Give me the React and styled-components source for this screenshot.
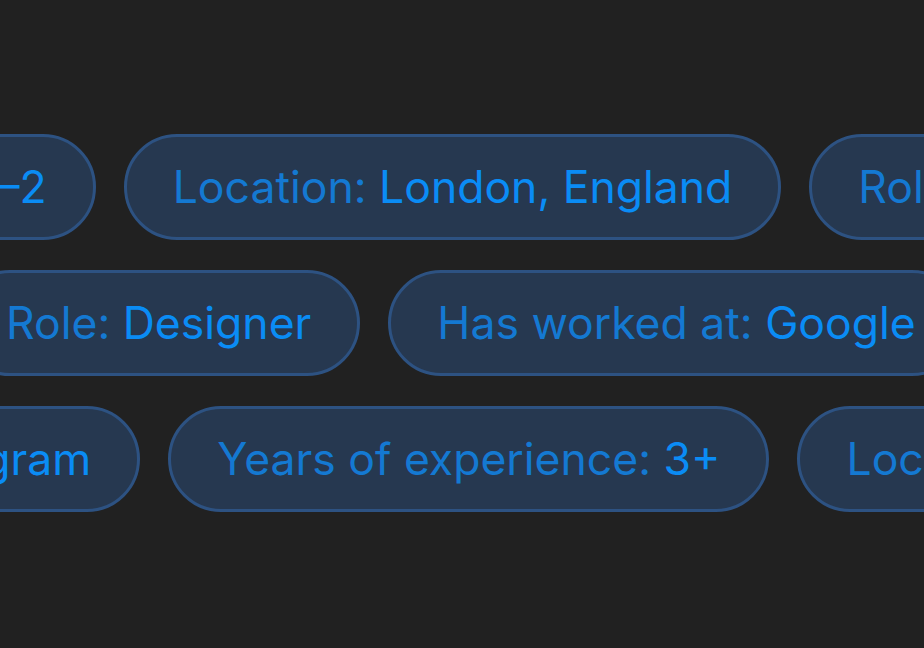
import React from "react";
import styled, { createGlobalStyle } from "styled-components";

const GlobalStyle = createGlobalStyle`
  html, body {
    margin: 0;
    padding: 0;
    background-color: #212121;
    overflow: hidden;
  }
`;

const Stage = styled.div`
  width: 924px;
  height: 648px;
  overflow: hidden;
  background-color: #212121;
  padding-top: 134px;
  box-sizing: border-box;
  display: flex;
  flex-direction: column;
  gap: 30px;
  font-family: Inter, Roboto, "Liberation Sans", sans-serif;
`;

const Row = styled.div`
  display: flex;
  flex-wrap: nowrap;
  gap: 28px;
  margin-left: ${(props) => props.offset}px;
`;

const Chip = styled.div`
  flex: none;
  display: flex;
  align-items: center;
  height: 106px;
  box-sizing: border-box;
  padding: 0 46px;
  border: 3px solid #2d5282;
  border-radius: 53px;
  background-color: #263850;
  font-size: 44.5px;
  font-weight: 400;
  white-space: nowrap;
`;

const Label = styled.span`
  color: #1479d2;
`;

const Value = styled.span`
  color: #0a8cf5;
`;

const rows = [
  {
    offset: -516,
    chips: [
      ["Years of experience:", "1–2"],
      ["Location:", "London, England"],
      ["Role:", "Designer"],
    ],
  },
  {
    offset: -43,
    chips: [
      ["Role:", "Designer"],
      ["Has worked at:", "Google"],
    ],
  },
  {
    offset: -495,
    chips: [
      ["Has worked at:", "Instagram"],
      ["Years of experience:", "3+"],
      ["Location:", "London, England"],
    ],
  },
];

function App() {
  return (
    <>
      <GlobalStyle />
      <Stage>
        {rows.map((row, i) => (
          <Row key={i} offset={row.offset}>
            {row.chips.map(([label, value], j) => (
              <Chip key={j}>
                <Label>{label}</Label>&nbsp;<Value>{value}</Value>
              </Chip>
            ))}
          </Row>
        ))}
      </Stage>
    </>
  );
}

export default App;
